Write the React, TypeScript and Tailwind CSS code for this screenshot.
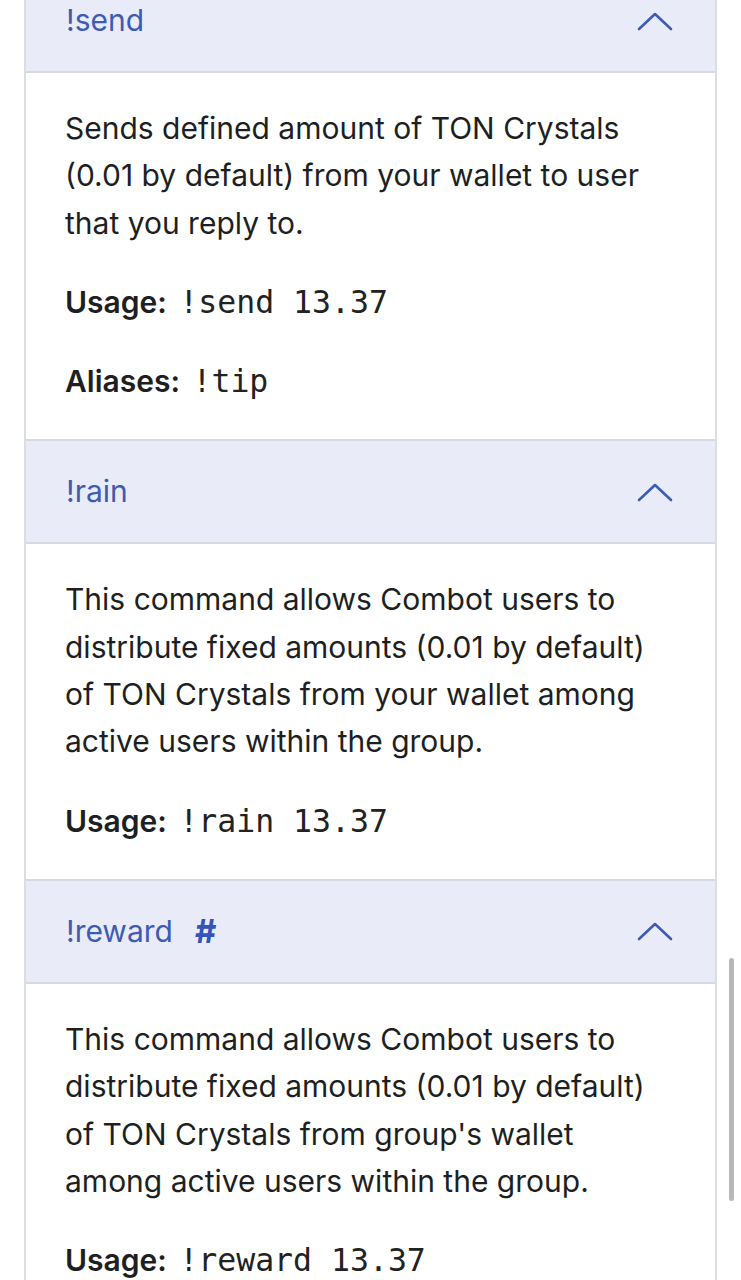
import React from "react";

const Chevron = () => (
  <svg width="36" height="20" viewBox="0 0 36 20" fill="none" className="shrink-0">
    <path d="M2 18 L18 3 L34 18" stroke="#3d5bb3" strokeWidth="2.6" strokeLinecap="round" strokeLinejoin="round" />
  </svg>
);

const Header = ({ title, hash }: { title: string; hash?: boolean }) => (
  <div className="flex h-[101px] items-center justify-between bg-[#e9ebf9] pl-[40px] pr-[42px]">
    <div className="flex items-center gap-[22px] text-[30px] text-[#3d5bb3]">
      <span>{title}</span>
      {hash && <span className="text-[33px] font-bold text-[#3553b8]">#</span>}
    </div>
    <Chevron />
  </div>
);

const Mono = ({ children }: { children: React.ReactNode }) => (
  <code className="ml-[4px] font-['DejaVu_Sans_Mono',monospace] text-[31.5px] text-[#222]">{children}</code>
);

const Body = ({ children }: { children: React.ReactNode }) => (
  <div className="flex flex-col gap-[32px] bg-white pl-[39px] pr-[36px] pt-[32px] pb-[34px] text-[30px] leading-[47.3px] text-[#1d1f22]">
    {children}
  </div>
);

export default function App() {
  return (
    <div className="h-[1280px] overflow-hidden bg-white font-['Inter',sans-serif]">
      <div className="relative">
        <div className="ml-[24px] mr-[24px] -mt-[30px] border-x-2 border-[#dcdde3]">
          <Header title="!send" />
          <div className="h-[2px] bg-[#d7d9e0]" />
          <Body>
            <p>Sends defined amount of TON Crystals (0.01 by default) from your wallet to user that you reply to.</p>
            <p>
              <b className="font-semibold">Usage:</b> <Mono>!send 13.37</Mono>
            </p>
            <p>
              <b className="font-semibold">Aliases:</b> <Mono>!tip</Mono>
            </p>
          </Body>
          <div className="h-[2px] bg-[#d7d9e0]" />
          <Header title="!rain" />
          <div className="h-[2px] bg-[#d7d9e0]" />
          <Body>
            <p>This command allows Combot users to distribute fixed amounts (0.01 by default) of TON Crystals from your wallet among active users within the group.</p>
            <p>
              <b className="font-semibold">Usage:</b> <Mono>!rain 13.37</Mono>
            </p>
          </Body>
          <div className="h-[2px] bg-[#d7d9e0]" />
          <Header title="!reward" hash />
          <div className="h-[2px] bg-[#d7d9e0]" />
          <Body>
            <p>This command allows Combot users to distribute fixed amounts (0.01 by default) of TON Crystals from group's wallet among active users within the group.</p>
            <p>
              <b className="font-semibold">Usage:</b> <Mono>!reward 13.37</Mono>
            </p>
          </Body>
        </div>
        <div className="absolute left-[729px] top-[988px] h-[243px] w-[5px] rounded-full bg-[#b8b8b8]" />
      </div>
    </div>
  );
}
